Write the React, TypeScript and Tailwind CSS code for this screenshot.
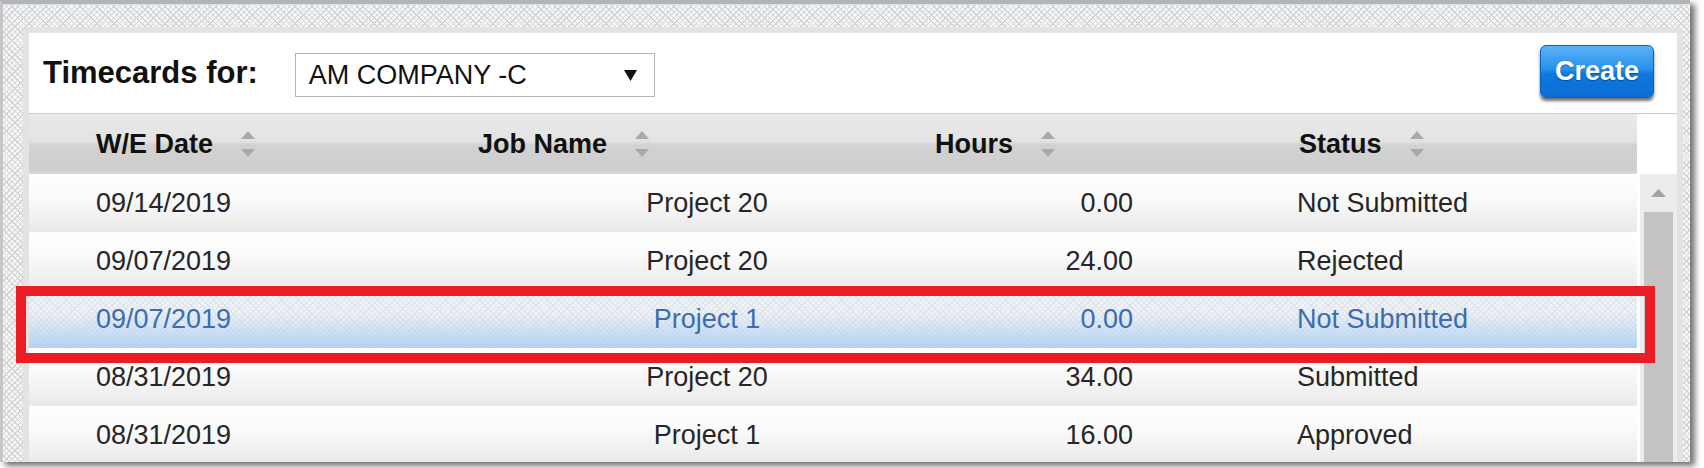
import React from "react";

type Row = { date: string; job: string; hours: string; status: string; selected?: boolean };

const rows: Row[] = [
  { date: "09/14/2019", job: "Project 20", hours: "0.00", status: "Not Submitted" },
  { date: "09/07/2019", job: "Project 20", hours: "24.00", status: "Rejected" },
  { date: "09/07/2019", job: "Project 1", hours: "0.00", status: "Not Submitted", selected: true },
  { date: "08/31/2019", job: "Project 20", hours: "34.00", status: "Submitted" },
  { date: "08/31/2019", job: "Project 1", hours: "16.00", status: "Approved" },
];

const SortIcon = () => (
  <svg width="14" height="28" viewBox="0 0 14 28" className="ml-[28px] shrink-0">
    <polygon points="7,1 14,9 0,9" fill="#a9a9a9" />
    <polygon points="0,19 14,19 7,27" fill="#a9a9a9" />
  </svg>
);

const HeaderCell = ({ label, className }: { label: string; className?: string }) => (
  <div className={`flex items-center ${className ?? ""}`}>
    <span>{label}</span>
    <SortIcon />
  </div>
);

export default function App() {
  return (
    <div className="relative w-[1704px] h-[468px] bg-white overflow-hidden font-['Liberation_Sans',Arial,sans-serif]">
      {/* screenshot frame */}
      <div className="w-[1690px] h-[462px] overflow-hidden border-l-[3px] border-l-[#c6c6c6] border-t-4 border-t-[#b4b4b4] bg-[#f5f5f5] bg-[repeating-linear-gradient(45deg,#d4d4d4_0px,#d4d4d4_1px,transparent_1px,transparent_4px),repeating-linear-gradient(-45deg,#d4d4d4_0px,#d4d4d4_1px,transparent_1px,transparent_4px)] pt-[23px] pl-[20px] pr-[7px] shadow-[inset_0_1px_0_#d3e2f4,5px_4px_6px_rgba(0,0,0,0.55)]">
        <div className="h-[520px] rounded-md border-[6px] border-[#e3e3e3] bg-white">
          {/* toolbar */}
          <div className="flex h-[81px] items-center border-b border-[#b3cdee] pl-[14px] pr-[23px]">
            <span className="text-[31px] font-bold text-[#111]">Timecards for:</span>
            <div className="ml-[37px] mt-[4px] flex h-[44px] w-[360px] items-center justify-between border border-[#b5b5b5] bg-white pl-[13px] pr-[17px]">
              <span className="text-[27px] text-[#111]">AM COMPANY -C</span>
              <svg width="13" height="11" viewBox="0 0 13 11">
                <polygon points="0,0 13,0 6.5,11" fill="#111" />
              </svg>
            </div>
            <button className="ml-auto -mt-[4px] h-[53px] w-[114px] rounded-[6px] border border-[#0b62b8] bg-[linear-gradient(to_bottom,#5cb2f6_0%,#2791ec_45%,#0d78dd_55%,#0a6fd3_100%)] text-[27px] font-bold text-white shadow-[0_3px_3px_rgba(0,0,0,0.55)] [text-shadow:0_1px_1px_rgba(0,0,0,0.35)]">
              Create
            </button>
          </div>

          <div className="flex">
            {/* table */}
            <div className="w-[1608px] shrink-0">
              <div className="grid h-[60px] grid-cols-[449px_457px_364px_1fr] items-center bg-[linear-gradient(to_bottom,#e9e9e9_0%,#e3e3e3_45%,#d2d2d2_52%,#cecece_92%,#d8d8d8_100%)] text-[27px] font-bold text-[#111]">
                <HeaderCell label="W/E Date" className="pl-[67px]" />
                <HeaderCell label="Job Name" />
                <HeaderCell label="Hours" />
                <HeaderCell label="Status" />
              </div>
              {rows.map((r, i) => (
                <div
                  key={i}
                  className={`grid h-[58px] grid-cols-[449px_458px_197px_1fr] items-center text-[27px] ${
                    r.selected
                      ? "bg-[#f1f3f6] bg-[linear-gradient(to_bottom,rgba(255,255,255,0)_0%,rgba(220,234,250,0.15)_40%,#b3d1f4_100%),repeating-linear-gradient(45deg,#dfe3e8_0px,#dfe3e8_1px,transparent_1px,transparent_4px),repeating-linear-gradient(-45deg,#dfe3e8_0px,#dfe3e8_1px,transparent_1px,transparent_4px)] text-[#3a6db3]"
                      : "border-t border-white bg-[linear-gradient(to_bottom,#ffffff_0%,#fafafa_40%,#e9e9e9_100%)] text-[#262626]"
                  }`}
                >
                  <span className="pl-[67px]">{r.date}</span>
                  <span className="text-center">{r.job}</span>
                  <span className="text-right">{r.hours}</span>
                  <span className="pl-[164px]">{r.status}</span>
                </div>
              ))}
            </div>

            {/* scrollbar */}
            <div className="ml-[3px] flex w-[37px] flex-col">
              <div className="h-[60px] bg-white" />
              <div className="flex flex-1 flex-col bg-[#ececec]">
                <div className="flex h-[38px] items-center justify-center">
                  <svg width="15" height="8" viewBox="0 0 15 8">
                    <polygon points="7.5,0 15,8 0,8" fill="#a3a3a3" />
                  </svg>
                </div>
                <div className="mx-[4px] flex-1 bg-[#c3c3c3]" />
              </div>
            </div>
          </div>
        </div>
      </div>

      {/* red annotation box */}
      <div className="absolute left-[16px] top-[286px] h-[77px] w-[1639px] border-[10px] border-[#ec1c24]" />
    </div>
  );
}
